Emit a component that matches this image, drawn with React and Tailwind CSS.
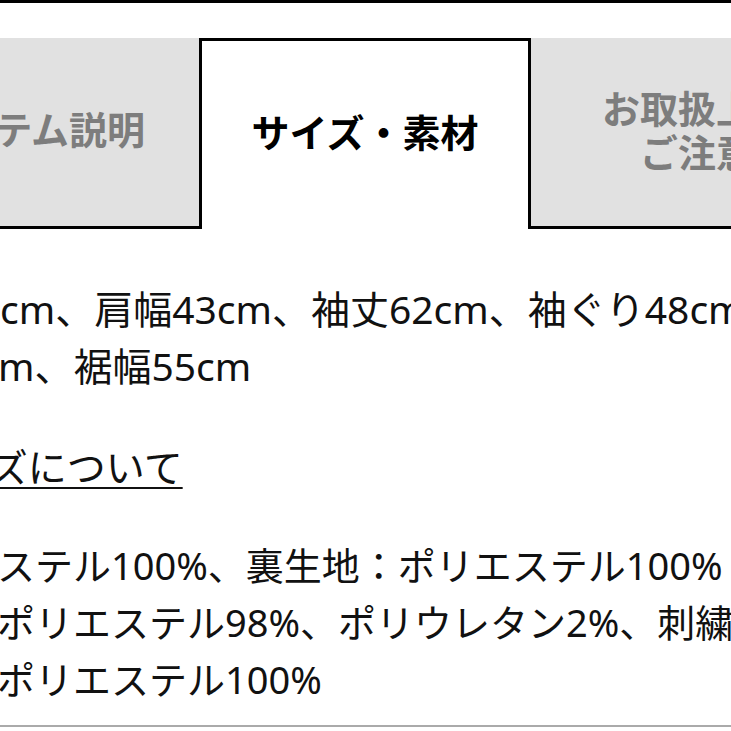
export default function App() {
  const font = { fontFamily: '"Noto Sans CJK JP", "Noto Sans", sans-serif' }
  const body = { fontFamily: '"Noto Sans", "Noto Sans CJK JP", sans-serif' }
  return (
    <div className="w-[731px] h-[731px] overflow-hidden bg-white text-[#111]" style={font}>
      {/* top rule */}
      <div className="h-[3px] bg-black" />

      {/* tabs */}
      <div className="flex mt-[35px] -ml-[133px] w-[996px] h-[191px]">
        <div className="w-[332px] shrink-0 bg-[#e1e1e1] border-b-[3px] border-black flex items-center justify-center pb-[8px]">
          <span className="text-[38px] font-bold text-[#7d7d7d] leading-none">アイテム説明</span>
        </div>
        <div className="w-[332px] shrink-0 bg-white border-t-[3px] border-x-[3px] border-black flex items-center justify-center pb-[8px]">
          <span className="text-[38px] font-bold text-black leading-none">サイズ・素材</span>
        </div>
        <div className="w-[332px] shrink-0 bg-[#e1e1e1] border-b-[3px] border-black flex flex-col items-center justify-center pb-[6px]">
          <span className="text-[38px] font-bold text-[#7d7d7d] leading-[44px]">お取扱上の</span>
          <span className="text-[38px] font-bold text-[#7d7d7d] leading-[44px]">ご注意</span>
        </div>
      </div>

      <div style={body}>
        {/* size */}
        <div className="mt-[51px] text-[39px] leading-[57px] whitespace-nowrap">
          <p>cm、肩幅43cm、袖丈62cm、袖ぐり48cm</p>
          <p className="-ml-[2px]">m、裾幅55cm</p>
        </div>

        <p className="mt-[44px] -ml-[88px] text-[39px] leading-[57px] whitespace-nowrap underline decoration-2 underline-offset-[5px]">
          サイズについて
        </p>

        {/* material */}
        <div className="mt-[42px] text-[38px] leading-[57px] whitespace-nowrap">
          <p className="-ml-[3px]">ステル100%、裏生地：ポリエステル100%</p>
          <p className="-ml-[3px]">ポリエステル98%、ポリウレタン2%、刺繍糸</p>
          <p className="-ml-[3px]">ポリエステル100%</p>
        </div>
      </div>

      <div className="mt-[17px] h-[2px] bg-[#aaaaaa]" />
    </div>
  )
}
